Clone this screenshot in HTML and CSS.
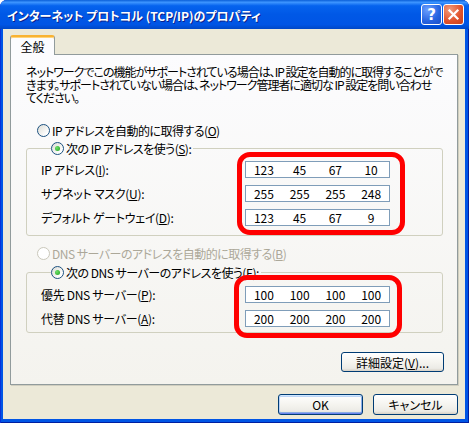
FILE: index.html
```html
<!DOCTYPE html>
<html lang="ja">
<head>
    <meta charset="UTF-8">
    <title>インターネット プロトコル (TCP/IP)のプロパティ</title>
    <link rel="stylesheet" href="styles.css">
</head>
<body>
    <div class="window">
        <div class="titlebar">
            <span class="title">インターネット プロトコル (TCP/IP)のプロパティ</span>
            <div class="tb-buttons">
                <span class="tb-btn help">?</span>
                <span class="tb-btn close">
                    <svg width="13" height="13" viewBox="0 0 13 13"><path d="M2.5 2.5 L10.5 10.5 M10.5 2.5 L2.5 10.5" stroke="#fff" stroke-width="2.2" stroke-linecap="square"/></svg>
                </span>
            </div>
        </div>

        <div class="client">
            <div class="tabs">
                <div class="tab">全般</div>
            </div>
            <div class="panel">
                <p class="intro">ネットワークでこの機能がサポートされている場合は、IP 設定を自動的に取得することがで<br>きます。サポートされていない場合は、ネットワーク管理者に適切な IP 設定を問い合わせ<br>てください。</p>

                <label class="option first"><span class="radio"></span><span>IP アドレスを自動的に取得する(<u>O</u>)</span></label>

                <fieldset class="group ip-group">
                    <legend><label class="option"><span class="radio checked"></span><span>次の IP アドレスを使う(<u>S</u>):</span></label></legend>
                    <div class="rows">
                        <div class="labels">
                            <span>IP アドレス(<u>I</u>):</span>
                            <span>サブネット マスク(<u>U</u>):</span>
                            <span>デフォルト ゲートウェイ(<u>D</u>):</span>
                        </div>
                        <div class="fields mark-ip">
                            <div class="ipbox"><span>123</span><span>45</span><span>67</span><span>10</span></div>
                            <div class="ipbox"><span>255</span><span>255</span><span>255</span><span>248</span></div>
                            <div class="ipbox"><span>123</span><span>45</span><span>67</span><span>9</span></div>
                        </div>
                    </div>
                </fieldset>

                <label class="option disabled dns-auto"><span class="radio"></span><span>DNS サーバーのアドレスを自動的に取得する(<u>B</u>)</span></label>

                <fieldset class="group dns-group">
                    <legend><label class="option"><span class="radio checked"></span><span>次の DNS サーバーのアドレスを使う(<u>E</u>):</span></label></legend>
                    <div class="rows">
                        <div class="labels">
                            <span>優先 DNS サーバー(<u>P</u>):</span>
                            <span>代替 DNS サーバー(<u>A</u>):</span>
                        </div>
                        <div class="fields mark-dns">
                            <div class="ipbox"><span>100</span><span>100</span><span>100</span><span>100</span></div>
                            <div class="ipbox"><span>200</span><span>200</span><span>200</span><span>200</span></div>
                        </div>
                    </div>
                </fieldset>

                <div class="adv-row">
                    <button class="btn adv">詳細設定(<u>V</u>)...</button>
                </div>
            </div>

            <div class="dialog-buttons">
                <button class="btn default">OK</button>
                <button class="btn">キャンセル</button>
            </div>
        </div>
    </div>
</body>
</html>
```

FILE: styles.css
```css
body {
    margin: 0;
    background: #fff;
    font-family: "Noto Sans CJK JP", sans-serif;
    font-size: 12px;
    color: #000;
}
.window {
    width: 469px;
    height: 423px;
    display: flex;
    flex-direction: column;
    background: #0055e5;
    border-radius: 7px 7px 0 0;
    overflow: hidden;
    box-shadow: inset 1px 0 #0831d9, inset -1px 0 #001ea0, inset 0 -1px #001ea0;
}
.titlebar {
    height: 29px;
    flex: none;
    display: flex;
    align-items: center;
    padding: 0 5px 0 7px;
    background: linear-gradient(to bottom, #0a5fd8 0%, #3d95ff 8%, #0563ee 20%, #0058e6 50%, #0055e5 85%, #0047c6 100%);
}
.title {
    flex: 1;
    color: #fff;
    font-weight: bold;
    font-size: 12px;
    font-feature-settings: "palt";
    text-shadow: 1px 1px #0a1f8a;
    padding-top: 1px;
}
.tb-buttons {
    display: flex;
    gap: 1px;
}
.tb-btn {
    width: 21px;
    height: 21px;
    box-sizing: border-box;
    border: 1px solid #fff;
    border-radius: 3px;
    display: flex;
    align-items: center;
    justify-content: center;
    color: #fff;
}
.help {
    background: radial-gradient(circle at 30% 25%, #6ba0ff, #2663e0 60%, #1a4fc8);
    font-family: "DejaVu Sans", sans-serif;
    font-weight: bold;
    font-size: 15px;
}
.close {
    background: radial-gradient(circle at 30% 25%, #f29a7a, #e0512a 60%, #c8401c);
}
.client {
    flex: 1;
    margin: 0 4px 4px 3px;
    background: #ece9d8;
    padding: 6px 7px 0 7px;
}
.tabs {
    display: flex;
    position: relative;
    z-index: 1;
}
.tab {
    width: 43px;
    height: 17px;
    margin-bottom: -1px;
    padding-top: 1px;
    text-align: center;
    background: #fcfcfe;
    border: 1px solid #919b9c;
    border-top: 2px solid #f9b332;
    border-bottom: none;
    border-radius: 3px 3px 0 0;
    box-shadow: inset 0 1px #ffd47a;
    line-height: 17px;
}
.panel {
    height: 329px;
    border: 1px solid #919b9c;
    background: linear-gradient(to bottom, #fcfcfe, #f4f3ee);
    box-shadow: 1px 1px #d0cebf;
    padding: 0 14px 0 15px;
    display: flex;
    flex-direction: column;
}
.intro {
    margin: 10px 0 0;
    line-height: 13px;
    letter-spacing: -1px;
    font-feature-settings: "palt";
    white-space: nowrap;
}
.option {
    display: flex;
    align-items: center;
    gap: 2px;
    height: 16px;
    font-feature-settings: "palt";
    letter-spacing: -0.5px;
    white-space: nowrap;
}
.option.first {
    margin: 18px 0 0 11px;
}
.option.disabled {
    color: #aca899;
}
.dns-auto {
    margin: 9px 0 0 11px;
}
.radio {
    width: 13px;
    height: 13px;
    box-sizing: border-box;
    border-radius: 50%;
    border: 1px solid #1c5180;
    background: linear-gradient(135deg, #dcdcd5, #fff 80%);
    display: flex;
    align-items: center;
    justify-content: center;
    flex: none;
}
.radio.checked::after {
    content: "";
    width: 5px;
    height: 5px;
    border-radius: 50%;
    background: radial-gradient(circle at 35% 35%, #6de06a, #21a121);
}
.disabled .radio {
    border-color: #cac8bb;
    background: #fff;
}
.group {
    margin: 2px 0 0;
    border: 1px solid #d0d0bf;
    border-radius: 3px;
    padding: 5px 14px 9px 14px;
    min-width: 0;
}
.group legend {
    padding: 0 2px 0 0;
    margin-left: 10px;
}
.dns-group {
    margin-top: 3px;
    padding: 6px 14px 5px 14px;
}
.rows {
    display: flex;
}
.labels {
    width: 204px;
    display: flex;
    flex-direction: column;
    gap: 7px;
    font-feature-settings: "palt";
    letter-spacing: -0.3px;
}
.labels span {
    height: 17px;
    line-height: 17px;
    white-space: nowrap;
}
.fields {
    position: relative;
    display: flex;
    flex-direction: column;
    gap: 7px;
}
/* red hand-drawn marks laid over the address boxes */
.fields::after {
    content: "";
    position: absolute;
    border: 5px solid #ff0000;
    border-radius: 13px;
}
.mark-ip::after {
    inset: -9px -15px -9px -8px;
}
.mark-dns::after {
    inset: -11px -12px -11px -11px;
}
.ipbox {
    width: 145px;
    height: 17px;
    box-sizing: border-box;
    border: 1px solid #7f9db9;
    background: #fff;
    display: flex;
    line-height: 15px;
}
.ipbox span {
    flex: 1;
    text-align: center;
}
.adv-row {
    display: flex;
    justify-content: flex-end;
    margin: 19px -1px 0 0;
}
.btn {
    font-family: "Noto Sans CJK JP", sans-serif;
    font-size: 12px;
    font-feature-settings: "palt";
    height: 20px;
    padding: 0;
    border: 1px solid #003c74;
    border-radius: 3px;
    background: linear-gradient(to bottom, #fff 0%, #f5f4ef 50%, #ecebe6 85%, #d6d0c5 100%);
    color: #000;
    line-height: 17px;
}
.adv {
    width: 103px;
}
.dialog-buttons {
    display: flex;
    justify-content: flex-end;
    gap: 10px;
    margin-top: 9px;
}
.dialog-buttons .btn {
    width: 85px;
    height: 21px;
}
.btn.default {
    box-shadow: inset 0 1px #cee7ff, inset 0 -1px #6982ee, inset 1px 0 #b8d2f7, inset -1px 0 #8aaee8, inset 0 2px #bcd4f6, inset 0 -2px #89ade4;
}
```
